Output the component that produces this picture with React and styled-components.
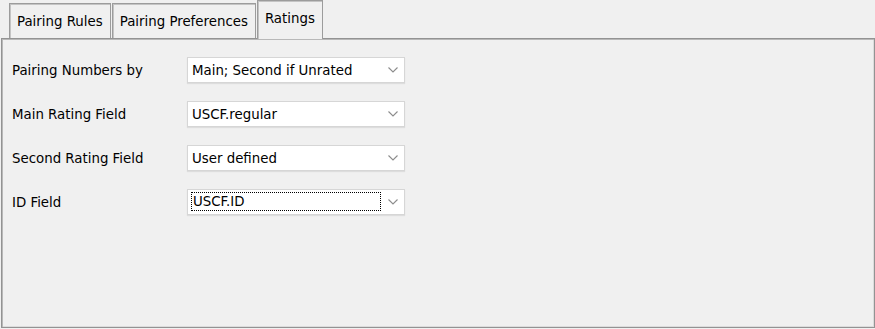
import React from 'react';
import styled, { createGlobalStyle } from 'styled-components';

const GlobalStyle = createGlobalStyle`
  html, body {
    margin: 0;
    padding: 0;
    background: #f0f0f0;
  }
  body {
    font-family: "DejaVu Sans", "Liberation Sans", sans-serif;
    font-size: 13.35px;
    color: #000;
  }
`;

const Window = styled.div`
  width: 875px;
  height: 329px;
  display: flex;
  flex-direction: column;
  box-sizing: border-box;
  padding: 0 0 1px 1px;
`;

const TabStrip = styled.div`
  display: flex;
  align-items: flex-end;
  height: 38px;
  padding-left: 8px;
  position: relative;
  z-index: 1;
`;

const Tab = styled.div`
  box-sizing: border-box;
  display: flex;
  align-items: center;
  height: ${p => (p.$active ? '39px' : '35px')};
  margin-bottom: ${p => (p.$active ? '-1px' : '0')};
  margin-right: 1px;
  padding: ${p => (p.$active ? '0 7px 3px 7px' : '0 7px')};
  background: #f0f0f0;
  border: 1px solid #9c9c9c;
  border-bottom: none;
  box-shadow: inset 1px 1px 0 #c4c4c4;
  white-space: nowrap;
`;

const Panel = styled.div`
  flex: 1;
  box-sizing: border-box;
  border: 1px solid #939393;
  box-shadow: inset 1px 1px 0 #b8b8b8, inset -1px -1px 0 #dcdcdc;
  padding: 18px 0 0 10px;
`;

const Form = styled.div`
  display: grid;
  grid-template-columns: 175px 218px;
  grid-auto-rows: 26px;
  row-gap: 18px;
  align-items: center;
`;

const Label = styled.div`
  white-space: nowrap;
`;

const Combo = styled.div`
  box-sizing: border-box;
  height: 26px;
  display: flex;
  align-items: center;
  background: #fff;
  border: 1px solid #d6d6d6;
  box-shadow: 0 1px 1px rgba(0, 0, 0, 0.08);
`;

const Value = styled.div`
  flex: 1;
  box-sizing: border-box;
  align-self: stretch;
  display: flex;
  align-items: center;
  margin: ${p => (p.$focused ? '2px 0 3px 3px' : '0 0 0 4px')};
  padding-left: ${p => (p.$focused ? '1px' : '0')};
  border: ${p => (p.$focused ? '1px dotted #000' : 'none')};
  white-space: nowrap;
`;

const ArrowBox = styled.div`
  width: 23px;
  display: flex;
  justify-content: center;
  align-items: center;
`;

const Chevron = () => (
  <svg width="10" height="6" viewBox="0 0 10 6">
    <path d="M0.5 0.5 L5 5 L9.5 0.5" fill="none" stroke="#8c8c8c" strokeWidth="1.1" />
  </svg>
);

const rows = [
  { label: 'Pairing Numbers by', value: 'Main; Second if Unrated' },
  { label: 'Main Rating Field', value: 'USCF.regular' },
  { label: 'Second Rating Field', value: 'User defined' },
  { label: 'ID Field', value: 'USCF.ID', focused: true },
];

export default function App() {
  return (
    <>
      <GlobalStyle />
      <Window>
        <TabStrip>
          <Tab>Pairing Rules</Tab>
          <Tab>Pairing Preferences</Tab>
          <Tab $active>Ratings</Tab>
        </TabStrip>
        <Panel>
          <Form>
            {rows.map(row => (
              <React.Fragment key={row.label}>
                <Label>{row.label}</Label>
                <Combo>
                  <Value $focused={row.focused}>{row.value}</Value>
                  <ArrowBox>
                    <Chevron />
                  </ArrowBox>
                </Combo>
              </React.Fragment>
            ))}
          </Form>
        </Panel>
      </Window>
    </>
  );
}
